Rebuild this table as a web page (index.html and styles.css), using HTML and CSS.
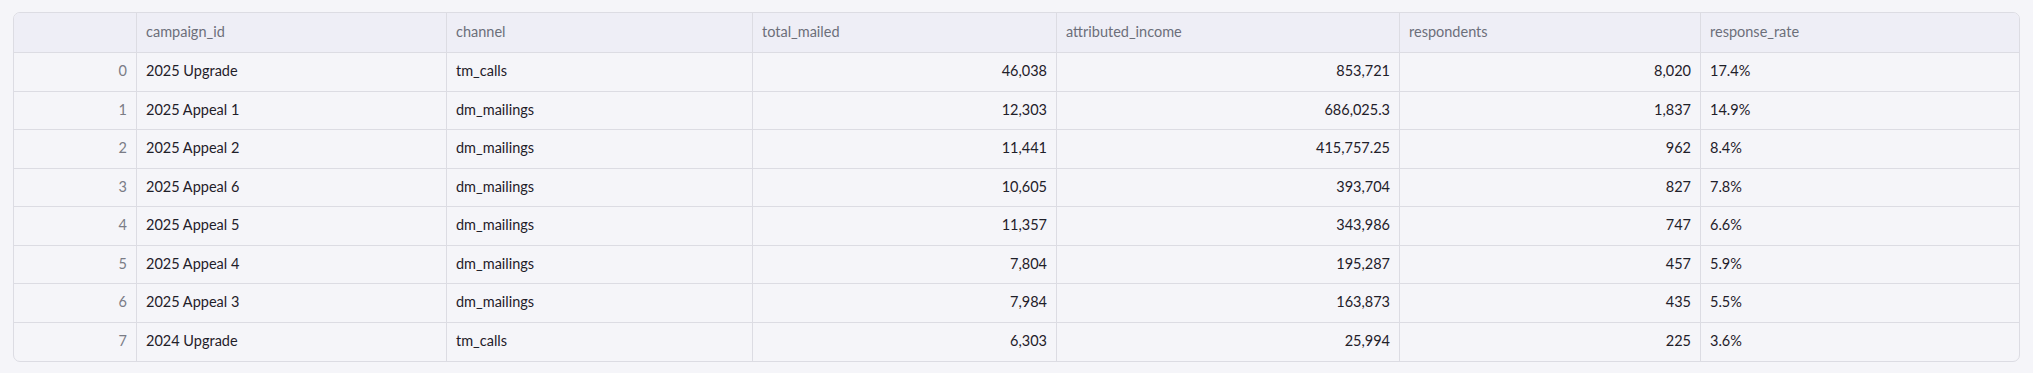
FILE: index.html
```html
<!DOCTYPE html>
<html>
<head>
<meta charset="utf-8">
<link rel="stylesheet" href="styles.css">
</head>
<body>
<div class="page">
  <div class="table">
    <div class="cell head idx"></div>
    <div class="cell head">campaign_id</div>
    <div class="cell head">channel</div>
    <div class="cell head">total_mailed</div>
    <div class="cell head">attributed_income</div>
    <div class="cell head">respondents</div>
    <div class="cell head last">response_rate</div>

    <div class="cell idx">0</div><div class="cell">2025 Upgrade</div><div class="cell">tm_calls</div><div class="cell num">46,038</div><div class="cell num">853,721</div><div class="cell num">8,020</div><div class="cell last">17.4%</div>
    <div class="cell idx">1</div><div class="cell">2025 Appeal 1</div><div class="cell">dm_mailings</div><div class="cell num">12,303</div><div class="cell num">686,025.3</div><div class="cell num">1,837</div><div class="cell last">14.9%</div>
    <div class="cell idx">2</div><div class="cell">2025 Appeal 2</div><div class="cell">dm_mailings</div><div class="cell num">11,441</div><div class="cell num">415,757.25</div><div class="cell num">962</div><div class="cell last">8.4%</div>
    <div class="cell idx">3</div><div class="cell">2025 Appeal 6</div><div class="cell">dm_mailings</div><div class="cell num">10,605</div><div class="cell num">393,704</div><div class="cell num">827</div><div class="cell last">7.8%</div>
    <div class="cell idx">4</div><div class="cell">2025 Appeal 5</div><div class="cell">dm_mailings</div><div class="cell num">11,357</div><div class="cell num">343,986</div><div class="cell num">747</div><div class="cell last">6.6%</div>
    <div class="cell idx">5</div><div class="cell">2025 Appeal 4</div><div class="cell">dm_mailings</div><div class="cell num">7,804</div><div class="cell num">195,287</div><div class="cell num">457</div><div class="cell last">5.9%</div>
    <div class="cell idx">6</div><div class="cell">2025 Appeal 3</div><div class="cell">dm_mailings</div><div class="cell num">7,984</div><div class="cell num">163,873</div><div class="cell num">435</div><div class="cell last">5.5%</div>
    <div class="cell idx bottom">7</div><div class="cell bottom">2024 Upgrade</div><div class="cell bottom">tm_calls</div><div class="cell num bottom">6,303</div><div class="cell num bottom">25,994</div><div class="cell num bottom">225</div><div class="cell last bottom">3.6%</div>
  </div>
</div>
</body>
</html>
```

FILE: styles.css
```css
html, body {
  margin: 0;
  padding: 0;
  background: #f5f5f9;
}
.page {
  padding: 12px 13px;
}
.table {
  display: grid;
  grid-template-columns: 123px 310px 306px 304px 343px 301px 1fr;
  grid-template-rows: 40px repeat(8, 38.5px);
  width: 2007px;
  border: 1px solid #dcdce3;
  border-radius: 7px;
  overflow: hidden;
  box-sizing: border-box;
  font-family: "Source Sans Pro", "Lato", "Noto Sans", sans-serif;
  font-size: 14.5px;
  color: #1f2029;
}
.cell {
  display: flex;
  align-items: center;
  padding: 0 9px 2px;
  border-right: 1px solid #dcdce3;
  border-bottom: 1px solid #dcdce3;
  white-space: nowrap;
  overflow: hidden;
}
.cell.last {
  border-right: none;
}
.cell.bottom {
  border-bottom: none;
}
.head {
  background: #eeeef6;
  color: #6c6f7a;
}
.idx {
  justify-content: flex-end;
  color: #7a7c86;
}
.head.idx {
  justify-content: flex-start;
}
.num {
  justify-content: flex-end;
}
```
